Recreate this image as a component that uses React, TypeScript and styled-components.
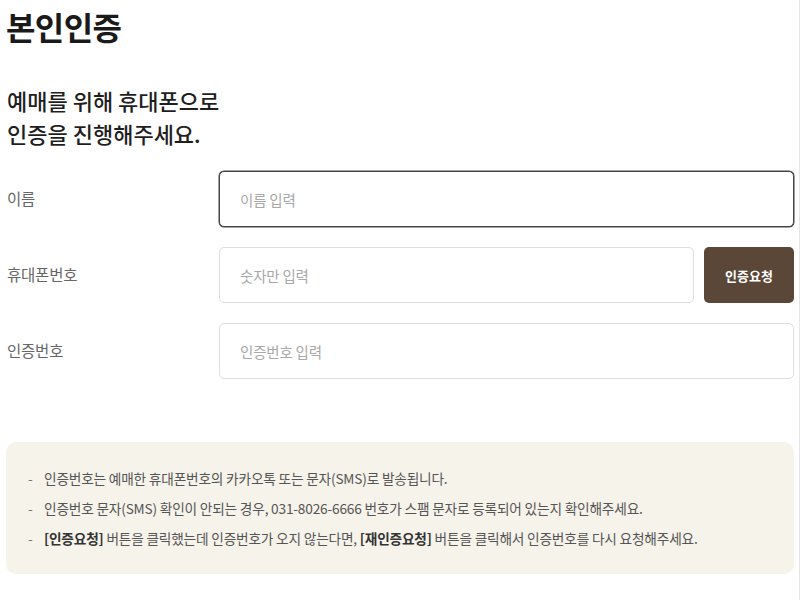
import React from "react";
import styled, { createGlobalStyle } from "styled-components";

const Global = createGlobalStyle`
  * { box-sizing: border-box; }
  html, body { margin: 0; padding: 0; background: #fff; }
  body { font-family: "Noto Sans CJK KR", "Noto Sans", sans-serif; color: #222; }
`;

const Page = styled.div`
  width: 800px;
  min-height: 600px;
  border-right: 1px solid #e6e6e6;
  padding: 6px 5px 0 6px;
`;

const Title = styled.h1`
  margin: 0;
  font-size: 32px;
  line-height: 40px;
  font-weight: 700;
  color: #1a1a1a;
  letter-spacing: -0.6px;
`;

const Subtitle = styled.p`
  margin: 38px 0 0 1px;
  font-size: 22px;
  line-height: 33px;
  font-weight: 500;
  color: #1f1f1f;
  letter-spacing: 0;
`;

const Form = styled.div`
  margin-top: 21px;
  display: flex;
  flex-direction: column;
  gap: 20px;
`;

const Row = styled.div`
  display: grid;
  grid-template-columns: 213px 1fr;
  align-items: center;
  height: 56px;
`;

const Label = styled.label`
  padding-left: 1px;
  font-size: 15.5px;
  color: #666;
  font-weight: 400;
  margin-top: -2px;
  letter-spacing: -0.2px;
`;

const Field = styled.div`
  display: flex;
  gap: 10px;
  height: 100%;
`;

const Input = styled.input<{ $active?: boolean }>`
  flex: 1;
  min-width: 0;
  height: 100%;
  border: 1px solid ${(p) => (p.$active ? "#444" : "#dedede")};
  box-shadow: ${(p) => (p.$active ? "0 0 0 0.5px #444" : "none")};
  border-radius: 5px;
  padding: 0 20px;
  font-family: "Noto Sans CJK KR", "Noto Sans", sans-serif;
  font-size: 14.5px;
  color: #333;
  outline: none;
  background: #fff;
  letter-spacing: -0.2px;
  &::placeholder { color: #a8a8a8; }
`;

const Button = styled.button`
  width: 90px;
  height: 100%;
  border: none;
  border-radius: 5px;
  background: #5b4738;
  color: #fff;
  font-family: "Noto Sans CJK KR", "Noto Sans", sans-serif;
  font-size: 13px;
  font-weight: 700;
  cursor: pointer;
`;

const Info = styled.ul`
  margin: 63px 0 0 0;
  list-style: none;
  background: #f6f3eb;
  border-radius: 10px;
  padding: 21px 20px 21px 22px;
`;

const Item = styled.li`
  display: flex;
  font-size: 13.7px;
  line-height: 30px;
  color: #555;
  letter-spacing: -0.2px;
  &::before {
    content: "-";
    display: inline-block;
    flex: none;
    width: 16px;
    color: #777;
  }
`;

const Strong = styled.b`
  font-weight: 700;
  color: #333;
`;

export default function App() {
  return (
    <>
      <Global />
      <Page>
        <Title>본인인증</Title>
        <Subtitle>
          예매를 위해 휴대폰으로
          <br />
          인증을 진행해주세요.
        </Subtitle>
        <Form>
          <Row>
            <Label>이름</Label>
            <Field>
              <Input $active autoFocus placeholder="이름 입력" />
            </Field>
          </Row>
          <Row>
            <Label>휴대폰번호</Label>
            <Field>
              <Input placeholder="숫자만 입력" />
              <Button>인증요청</Button>
            </Field>
          </Row>
          <Row>
            <Label>인증번호</Label>
            <Field>
              <Input placeholder="인증번호 입력" />
            </Field>
          </Row>
        </Form>
        <Info>
          <Item>인증번호는 예매한 휴대폰번호의 카카오톡 또는 문자(SMS)로 발송됩니다.</Item>
          <Item>인증번호 문자(SMS) 확인이 안되는 경우, 031-8026-6666 번호가 스팸 문자로 등록되어 있는지 확인해주세요.</Item>
          <Item>
            <span>
              <Strong>[인증요청]</Strong> 버튼을 클릭했는데 인증번호가 오지 않는다면,{" "}
              <Strong>[재인증요청]</Strong> 버튼을 클릭해서 인증번호를 다시 요청해주세요.
            </span>
          </Item>
        </Info>
      </Page>
    </>
  );
}
